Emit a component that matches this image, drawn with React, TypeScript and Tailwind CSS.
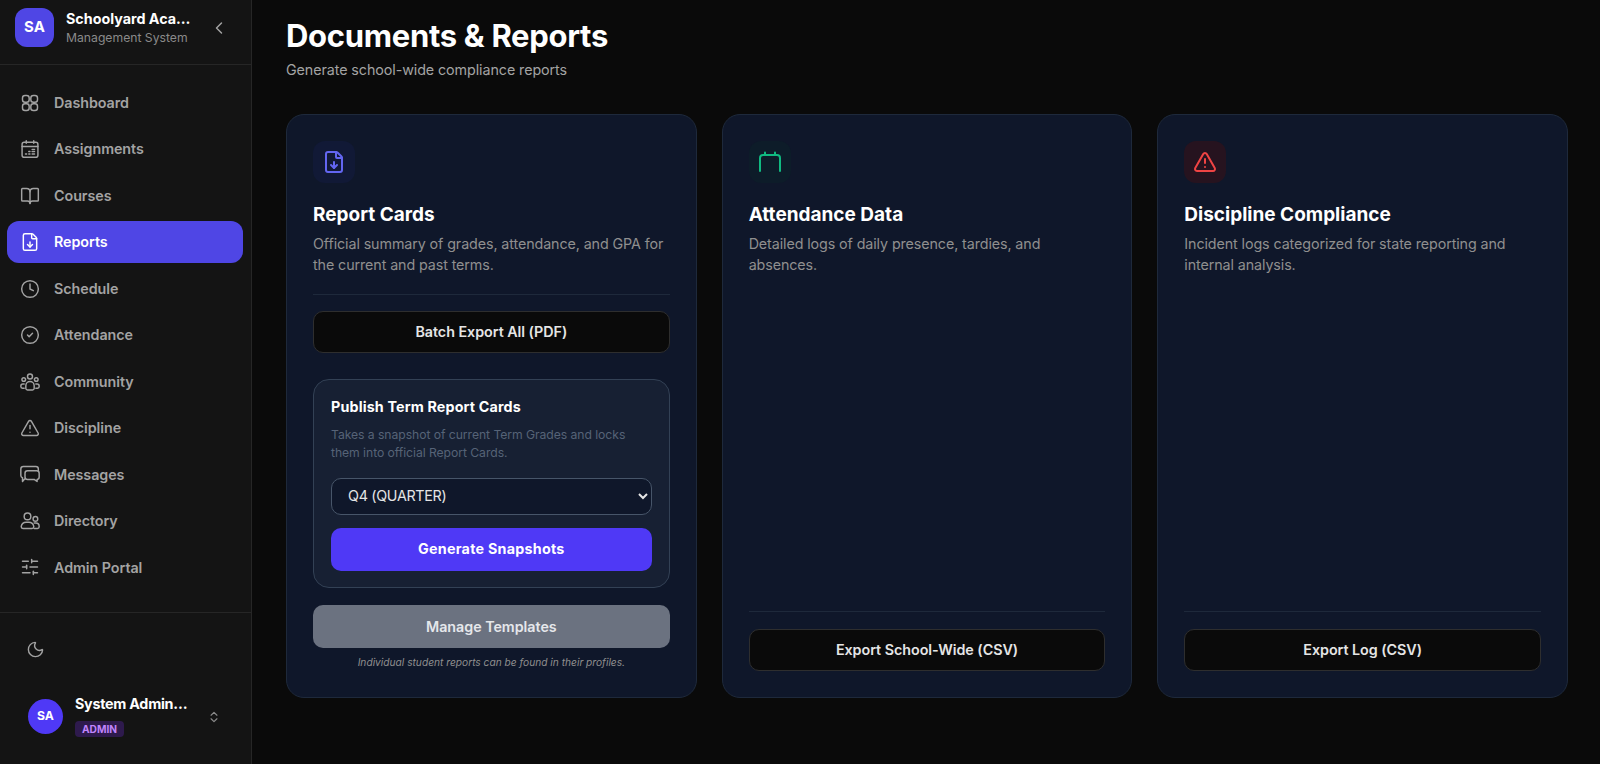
import React from "react";
import { BookOpen, ChevronLeft, ChevronsUpDown, CircleCheck, Clock, FileDown, Moon, SlidersHorizontal, TriangleAlert } from "lucide-react";

const sw = { fill: "none", stroke: "currentColor", strokeWidth: 1.75, strokeLinecap: "round" as const, strokeLinejoin: "round" as const };

function Grid4() {
  return (
    <svg width="20" height="20" viewBox="0 0 24 24" {...sw}>
      <rect x="3" y="3" width="8" height="8" rx="3" />
      <rect x="13" y="3" width="8" height="8" rx="3" />
      <rect x="3" y="13" width="8" height="8" rx="3" />
      <rect x="13" y="13" width="8" height="8" rx="3" />
    </svg>
  );
}
function CalendarBars() {
  return (
    <svg width="20" height="20" viewBox="0 0 24 24" {...sw}>
      <rect x="2.5" y="4" width="19" height="18" rx="2.5" />
      <path d="M7.5 2v3M16.5 2v3M2.5 9h19" />
      <path d="M6.500 18h1.500M10.500 18h1.500M10.500 15h1.500M14.500 18h3M14.500 15h3M14.500 12.500h3" strokeWidth="1.600" />
    </svg>
  );
}
function Community() {
  return (
    <svg width="20" height="20" viewBox="0 0 24 24" {...sw}>
      <circle cx="12" cy="5.500" r="3" />
      <circle cx="4.500" cy="9" r="2.200" />
      <circle cx="19.500" cy="9" r="2.200" />
      <path d="M7 20v-3.500a5 5 0 0 1 10 0V20a2 2 0 0 1-2 1.500H9A2 2 0 0 1 7 20z" />
      <path d="M5 14.500H3.500A2.500 2.500 0 0 0 1 17v.5A2 2 0 0 0 3 19.500h2M19 14.500h1.500A2.500 2.500 0 0 1 23 17v.5a2 2 0 0 1-2 2h-2" />
    </svg>
  );
}
function Messages() {
  return (
    <svg width="20" height="20" viewBox="0 0 24 24" {...sw}>
      <path d="M5.500 18 3 21v-4.500A3 3 0 0 1 1 13.500V6a3 3 0 0 1 3-3h15a3 3 0 0 1 3 3v2" />
      <path d="M9 8h11a3 3 0 0 1 3 3v4.500a3 3 0 0 1-2.500 3V21l-3.500-2.500H9a3 3 0 0 1-3-3V11a3 3 0 0 1 3-3z" />
    </svg>
  );
}
function People() {
  return (
    <svg width="20" height="20" viewBox="0 0 24 24" {...sw}>
      <circle cx="9" cy="6.500" r="4" />
      <circle cx="18.500" cy="9.500" r="2.800" />
      <path d="M1.500 19v-.5a6 6 0 0 1 6-5h3a6 6 0 0 1 6 5v.5a2 2 0 0 1-2 2h-11a2 2 0 0 1-2-2z" />
      <path d="M17 14.500h2a4 4 0 0 1 4 4V19a2 2 0 0 1-2 2h-4" />
    </svg>
  );
}
function PartCalendar() {
  return (
    <svg width="24" height="24" viewBox="0 0 24 24" {...sw} strokeWidth="2">
      <path d="M2 21V8a3 3 0 0 1 3-3h14a3 3 0 0 1 3 3v13" />
      <path d="M7 2.500V5M17 2.500V5" />
    </svg>
  );
}

const nav: [string, React.ReactNode][] = [
  ["Dashboard", <Grid4 />],
  ["Assignments", <CalendarBars />],
  ["Courses", <BookOpen size={20} strokeWidth={1.75} />],
  ["Reports", <FileDown size={20} strokeWidth={1.75} />],
  ["Schedule", <Clock size={20} strokeWidth={1.75} />],
  ["Attendance", <CircleCheck size={20} strokeWidth={1.75} />],
  ["Community", <Community />],
  ["Discipline", <TriangleAlert size={20} strokeWidth={1.75} />],
  ["Messages", <Messages />],
  ["Directory", <People />],
  ["Admin Portal", <SlidersHorizontal size={20} strokeWidth={1.75} />],
];

function Sidebar() {
  return (
    <aside className="flex h-full w-[252px] shrink-0 flex-col border-r border-[#262626] bg-[#141414]">
      <div className="flex h-[65px] shrink-0 items-start border-b border-[#262626] pl-[15px] pr-[22px] pt-[8px]">
        <div className="flex h-[39px] w-[39px] shrink-0 items-center justify-center rounded-xl bg-[#4f46e5] text-[15px] font-bold text-white">SA</div>
        <div className="ml-[12px] mt-[0.5px] min-w-0 flex-1">
          <div className="w-[126px] truncate text-[14.3px] font-bold leading-[20px] text-white">Schoolyard Academy</div>
          <div className="mt-[1px] text-[12.2px] leading-[16px] text-[#8a8a8a]">Management System</div>
        </div>
        <ChevronLeft size={20} strokeWidth={1.75} className="mt-[10px] text-[#a3a3a3]" />
      </div>
      <nav className="flex flex-1 flex-col gap-[4px] pl-[7px] pr-[8px] pt-[16.5px]">
        {nav.map(([label, icon]) => (
          <div
            key={label}
            className={
              label === "Reports"
                ? "flex h-[42.47px] items-center gap-[14px] rounded-xl bg-[#4f46e5] pl-[13px] text-[14.3px] font-semibold tracking-[-0.05px] text-white"
                : "flex h-[42.47px] items-center gap-[14px] rounded-xl pl-[13px] text-[14.3px] font-semibold tracking-[-0.05px] text-[#a3a3a3]"
            }
          >
            <span className="flex w-[20px] justify-center">{icon}</span>
            {label}
          </div>
        ))}
      </nav>
      <div className="h-[152px] shrink-0 border-t border-[#262626]">
        <div className="pl-[26px] pt-[27px] text-[#a3a3a3]">
          <Moon size={19} strokeWidth={1.75} />
        </div>
        <div className="mt-[37px] flex items-center pl-[28px] pr-[30px]">
          <div className="flex h-[35px] w-[35px] shrink-0 items-center justify-center rounded-full bg-[#4f39f6] text-[12.2px] font-bold text-white">SA</div>
          <div className="ml-[12px] min-w-0 flex-1">
            <div className="-mt-[1px] w-[116px] truncate text-[14.3px] font-bold leading-[18px] tracking-[-0.25px] text-white">System Administrator</div>
            <span className="mt-[8px] block w-fit rounded-[4px] bg-[#2e1a4d] px-[7px] text-[10.2px] font-bold leading-[16px] text-[#c084fc]">ADMIN</span>
          </div>
          <ChevronsUpDown size={14} className="text-[#8a8a8a]" />
        </div>
      </div>
    </aside>
  );
}

function Card(props: { icon: React.ReactNode; box: string; title: string; desc: string; children: React.ReactNode }) {
  return (
    <section className="flex min-w-0 flex-col rounded-[18px] border border-[#1e293b] bg-[#0f172a] px-[26px] pt-[26px] pb-[26px]">
      <div className={"flex h-[42px] w-[42px] items-center justify-center rounded-xl " + props.box}>{props.icon}</div>
      <h2 className="mt-[21px] text-[19px] font-bold leading-[22px] text-white">{props.title}</h2>
      <p className="mt-[7px] text-[14.3px] leading-[21px] tracking-[-0.1px] text-[#8f8f8f]">{props.desc}</p>
      {props.children}
    </section>
  );
}

function OutlineBtn({ label }: { label: string }) {
  return (
    <button className="flex h-[42px] w-full shrink-0 items-center justify-center rounded-[10px] border border-[#2e2e2e] bg-[#0a0a0a] text-[14.3px] font-semibold tracking-[-0.03px] text-[#e5e5e5]">{label}</button>
  );
}

export default function App() {
  return (
    <div className="flex h-[764px] w-[1600px] overflow-hidden bg-[#0a0a0a] font-['Inter',sans-serif]">
      <Sidebar />
      <main className="flex min-w-0 flex-1 flex-col pl-[34px] pr-[32px] pt-[17px]">
        <h1 className="text-[31px] font-bold leading-[38px] tracking-[-0.3px] text-white">Documents &amp; Reports</h1>
        <p className="mt-[4px] text-[14.3px] leading-[21px] tracking-[-0.08px] text-[#a3a3a3]">Generate school-wide compliance reports</p>
        <div className="mt-[34px] grid h-[584px] grid-cols-3 gap-[25px]">
          <Card icon={<FileDown size={24} className="text-[#6366f1]" />} box="bg-[#111936]" title="Report Cards" desc="Official summary of grades, attendance, and GPA for the current and past terms.">
            <div className="mt-[19px] border-t border-[#1e293b] pt-[16px]">
              <OutlineBtn label="Batch Export All (PDF)" />
            </div>
            <div className="mt-[26px] rounded-[16px] border border-[#334155] bg-[#172033] px-[17px] pt-[17px] pb-[16px]">
              <h3 className="text-[14.3px] font-bold leading-[20px] tracking-[0.15px] text-white">Publish Term Report Cards</h3>
              <p className="mt-[9px] text-[12.2px] leading-[18px] tracking-[-0.06px] text-[#566377]">Takes a snapshot of current Term Grades and locks them into official Report Cards.</p>
              <select className="mt-[16px] h-[37px] w-full rounded-[10px] border border-[#475569] bg-[#0f172a] pl-[12px] pb-[2px] text-[14.3px] tracking-[-0.3px] text-[#e5e5e5]">
                <option>Q4 (QUARTER)</option>
              </select>
              <button className="mt-[13px] flex h-[43px] w-full items-center justify-center rounded-[10px] bg-[#4f39f6] pb-[1px] text-[14.3px] font-bold tracking-[0.25px] text-white">Generate Snapshots</button>
            </div>
            <button className="mt-[17px] flex h-[43px] w-full shrink-0 items-center justify-center rounded-[10px] bg-[#6b7280] text-[14.3px] font-semibold tracking-[-0.03px] text-[#e5e7eb]">Manage Templates</button>
            <p className="mt-[7px] text-center text-[10.2px] italic leading-[14px] text-[#8f8f8f]">Individual student reports can be found in their profiles.</p>
          </Card>
          <Card icon={<PartCalendar />} box="bg-[#0d1c29] text-[#10b981]" title="Attendance Data" desc="Detailed logs of daily presence, tardies, and absences.">
            <div className="mt-auto border-t border-[#1e293b] pt-[17px]">
              <OutlineBtn label="Export School-Wide (CSV)" />
            </div>
          </Card>
          <Card icon={<TriangleAlert size={24} className="text-[#ef4444]" />} box="bg-[#26131f]" title="Discipline Compliance" desc="Incident logs categorized for state reporting and internal analysis.">
            <div className="mt-auto border-t border-[#1e293b] pt-[17px]">
              <OutlineBtn label="Export Log (CSV)" />
            </div>
          </Card>
        </div>
      </main>
    </div>
  );
}
